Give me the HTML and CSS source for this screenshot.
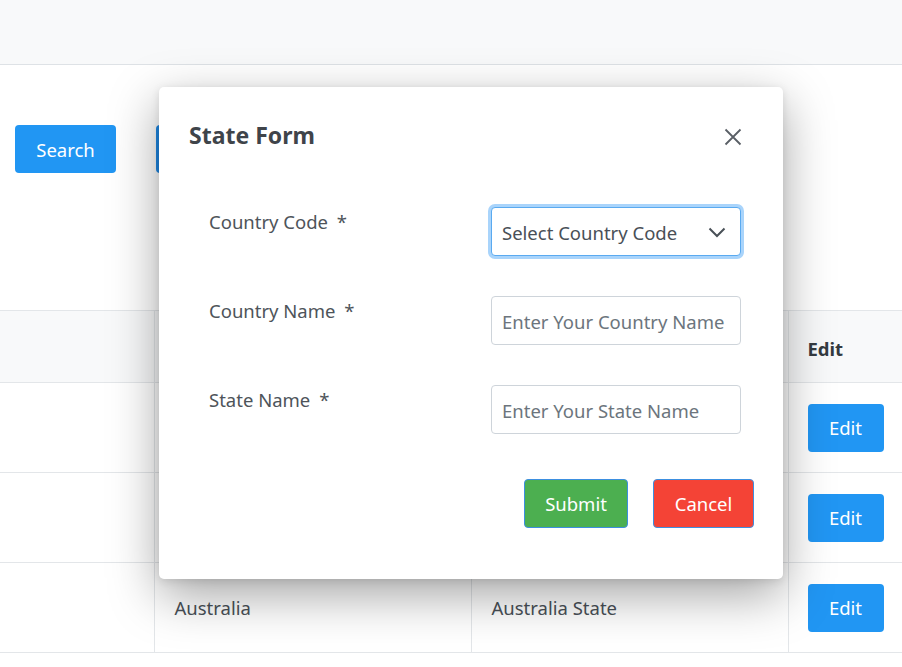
FILE: index.html
```html
<!DOCTYPE html>
<html lang="en">
<head>
<meta charset="utf-8">
<title>States</title>
<link rel="stylesheet" href="styles.css">
</head>
<body>
<header class="topbar"></header>
<div class="toolbar">
  <button class="btn btn-blue btn-search">Search</button>
  <button class="btn btn-blue btn-add" aria-label="Add"></button>
</div>
<table class="grid">
  <colgroup>
    <col class="c1"><col class="c2"><col class="c3"><col class="c4">
  </colgroup>
  <thead>
    <tr><th></th><th></th><th></th><th>Edit</th></tr>
  </thead>
  <tbody>
    <tr><td></td><td></td><td></td><td><button class="btn btn-blue btn-edit">Edit</button></td></tr>
    <tr><td></td><td></td><td></td><td><button class="btn btn-blue btn-edit">Edit</button></td></tr>
    <tr><td></td><td>Australia</td><td>Australia State</td><td><button class="btn btn-blue btn-edit">Edit</button></td></tr>
  </tbody>
</table>

<div class="modal">
  <div class="modal-head">
    <h2 class="modal-title">State Form</h2>
    <button class="close" aria-label="Close">
      <svg width="18" height="18" viewBox="0 0 18 18"><path d="M1.5 1.5 L16.5 16.5 M16.5 1.5 L1.5 16.5" stroke="#5a5f66" stroke-width="1.8" fill="none"/></svg>
    </button>
  </div>
  <form class="form">
    <label class="lbl">Country Code <span class="req">*</span></label>
    <div class="select-wrap">
      <select class="field select"><option>Select Country Code</option></select>
      <svg class="chev" width="18" height="11" viewBox="0 0 18 11"><path d="M1.5 1.5 L9 9 L16.5 1.5" stroke="#495057" stroke-width="2" fill="none"/></svg>
    </div>
    <label class="lbl">Country Name <span class="req">*</span></label>
    <input class="field" type="text" placeholder="Enter Your Country Name">
    <label class="lbl">State Name <span class="req">*</span></label>
    <input class="field" type="text" placeholder="Enter Your State Name">
  </form>
  <div class="actions">
    <button class="btn btn-green">Submit</button>
    <button class="btn btn-red">Cancel</button>
  </div>
</div>
</body>
</html>
```
FILE: styles.css
```css
* { box-sizing: border-box; }
html, body { margin: 0; padding: 0; background: #fff; }
body {
  font-family: "Noto Sans", "Open Sans", sans-serif;
  font-size: 18.5px;
  color: #495057;
  width: 902px;
  height: 667px;
  overflow: hidden;
  position: relative;
}
.topbar {
  height: 65px;
  background: #f8f9fa;
  border-bottom: 1px solid #dee2e6;
}
.toolbar {
  display: flex;
  gap: 40px;
  padding: 60px 0 0 15px;
  height: 245px;
}
.btn {
  font-family: inherit;
  font-size: 18.5px;
  border: 1px solid transparent;
  border-radius: 4px;
  color: #fff;
  cursor: pointer;
  padding: 0 0 0 0;
  line-height: 1;
}
.btn-blue { background: #2196f3; }
.btn-search { width: 101px; height: 48px; padding-top: 3px; }
.btn-add { width: 101px; height: 48px; background: #1e88e5; }
.grid {
  border-collapse: collapse;
  width: 920px;
  table-layout: fixed;
}
.c1 { width: 154px; }
.c2 { width: 317px; }
.c3 { width: 317px; }
.c4 { width: 132px; }
.grid th, .grid td {
  border: 1px solid #e3e6e9;
  text-align: left;
  padding: 0 20px;
  font-weight: normal;
}
.grid th:first-child, .grid td:first-child { border-left: none; }
.grid th:last-child, .grid td:last-child { padding-left: 19px; }
.grid thead tr { height: 72px; background: #f8f9fa; }
.grid th { font-weight: 700; color: #343a40; padding-top: 4px; }
.grid tbody tr { height: 90px; }
.btn-edit { width: 76px; height: 48px; padding-top: 2px; }

.modal {
  position: absolute;
  left: 159px;
  top: 87px;
  width: 624px;
  height: 492px;
  background: #fff;
  border-radius: 5px;
  box-shadow: 0 16px 50px rgba(0,0,0,0.36), 0 2px 8px rgba(0,0,0,0.1);
  padding: 30px 29px 0 30px;
}
.modal-head {
  display: flex;
  justify-content: space-between;
  align-items: center;
  height: 36px;
}
.modal-title {
  margin: 0;
  font-size: 23px;
  font-weight: 700;
  color: #3f444a;
  line-height: 36px;
}
.close {
  background: none;
  border: none;
  padding: 0;
  margin-right: 12px;
  margin-top: 3px;
  width: 18px;
  height: 18px;
  display: flex;
}
.form {
  display: grid;
  grid-template-columns: 282px 250px;
  row-gap: 40px;
  padding: 54px 0 0 20px;
}
.lbl {
  padding-top: 1px;
  line-height: 27px;
  color: #4e545a;
}
.req { margin-left: 4px; }
.field {
  width: 250px;
  height: 49px;
  border: 1px solid #ced4da;
  border-radius: 4px;
  padding: 2px 10px 0;
  font-family: inherit;
  font-size: 18.5px;
  color: #495057;
  background: #fff;
  outline: none;
}
.field::placeholder { color: #6c757d; }
.select-wrap { position: relative; width: 250px; height: 49px; }
.select {
  appearance: none;
  -webkit-appearance: none;
  border-color: #5aaaf0;
  box-shadow: 0 0 0 3px #a9d4fb;
}
.chev { position: absolute; left: 217px; top: 20px; pointer-events: none; }
.actions {
  display: flex;
  justify-content: flex-end;
  gap: 25px;
  padding-top: 45px;
}
.btn-green { width: 104px; height: 49px; background: #4caf50; border-color: #3d8fe0; padding-top: 2px; }
.btn-red { width: 101px; height: 49px; background: #f44336; border-color: #3d8fe0; padding-top: 2px; }
```
